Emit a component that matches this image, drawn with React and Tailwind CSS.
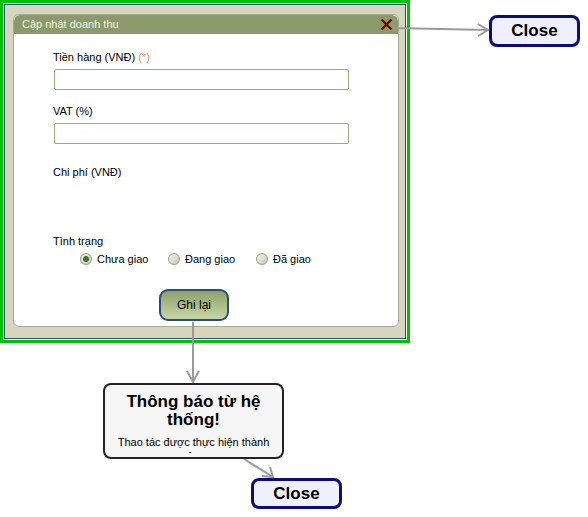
import { useState } from "react";

const font = { fontFamily: '"Liberation Sans", Arial, sans-serif' };

function Radio({ checked, label, onClick }) {
  return (
    <button type="button" onClick={onClick} className="flex items-center w-[88px] h-[14px] text-left">
      <span className="w-[12px] h-[12px] rounded-full border border-[#9a9a88] bg-gradient-to-br from-[#f4f4ec] to-[#c8c8b8] flex items-center justify-center">
        {checked && <span className="w-[6px] h-[6px] rounded-full bg-[#4a7a2a] border border-[#3a5a1a]" />}
      </span>
      <span className="ml-[5px] text-[11px] leading-[14px] text-black">{label}</span>
    </button>
  );
}

export default function App() {
  const [status, setStatus] = useState("chua");
  const [amount, setAmount] = useState("");
  const [vat, setVat] = useState("");

  return (
    <div className="relative w-[588px] h-[517px] bg-white overflow-hidden" style={font}>
      {/* dialog with green highlight */}
      <div className="absolute left-0 top-0 w-[410px] h-[343px] border-[3px] border-[#00c000] p-px bg-white">
        <div className="w-full h-full border border-[#2c4c7c] bg-[#d6d6be] pl-[8px] pt-[9px] pr-[4px]">
          <div className="w-[386px] h-[313px] bg-white rounded-[6px] border border-[#a8a898] overflow-hidden flex flex-col">
            <div className="h-[19px] bg-[#8a9a6a] flex items-center justify-between pl-[8px] pr-[5px] rounded-t-[6px]">
              <span className="text-[11px] text-[#f4f4e8]">Cập nhật doanh thu</span>
              <svg width="13" height="13" viewBox="0 0 13 13">
                <path d="M1.5 1.5 L11.5 11.5 M11.5 1.5 L1.5 11.5" stroke="#7a0000" strokeWidth="2.2" />
              </svg>
            </div>
            <div className="pl-[39px] flex flex-col">
              <div className="mt-[16px] text-[11px] leading-[14px] text-black">
                Tiền hàng (VNĐ) <span className="text-[#f08a5a]">(*)</span>
              </div>
              <input
                value={amount}
                onChange={(e) => setAmount(e.target.value)}
                className="mt-[5px] ml-px w-[295px] h-[21px] border border-[#9aae78] rounded-[2px] outline-none px-1 text-[12px]"
              />
              <div className="mt-[14px] text-[11px] leading-[14px] text-black">VAT (%)</div>
              <input
                value={vat}
                onChange={(e) => setVat(e.target.value)}
                className="mt-[5px] ml-px w-[295px] h-[21px] border border-[#9aae78] rounded-[2px] outline-none px-1 text-[12px]"
              />
              <div className="mt-[21px] text-[11px] leading-[14px] text-black">Chi phí (VNĐ)</div>
              <div className="mt-[55px] text-[11px] leading-[14px] text-black">Tình trạng</div>
              <div className="mt-[4px] ml-[27px] flex">
                <Radio checked={status === "chua"} label="Chưa giao" onClick={() => setStatus("chua")} />
                <Radio checked={status === "dang"} label="Đang giao" onClick={() => setStatus("dang")} />
                <Radio checked={status === "da"} label="Đã giao" onClick={() => setStatus("da")} />
              </div>
              <button
                type="button"
                className="mt-[23px] ml-[106px] w-[70px] h-[32px] rounded-[9px] border-2 border-[#2c4c7c] bg-gradient-to-b from-[#8ea268] to-[#c8d6a8] text-[12px] text-black"
              >
                Ghi lại
              </button>
            </div>
          </div>
        </div>
      </div>

      {/* connector arrows */}
      <svg className="absolute left-0 top-0 pointer-events-none" width="588" height="517">
        <g stroke="#9a9a9a" strokeWidth="2" fill="none">
          <line x1="393" y1="28" x2="488" y2="30" />
          <polyline points="478,24 488,30 478,36" />
          <line x1="193" y1="322" x2="193" y2="382" />
          <polyline points="187,371 193,382 199,371" />
          <line x1="244" y1="459" x2="273" y2="477" />
          <polyline points="262,476 273,477 270,467" />
        </g>
      </svg>

      <div className="absolute left-[489px] top-[15px] w-[91px] h-[32px] rounded-[8px] border-[3px] border-[#0c0c80] bg-[#eef0fe] flex items-center justify-center text-[17px] font-bold text-black">
        Close
      </div>

      <div className="absolute left-[103px] top-[383px] w-[181px] h-[76px] rounded-[8px] border-2 border-[#222] bg-[#f6f6f6] overflow-hidden flex flex-col items-center pt-[8px] px-[4px] text-center">
        <div className="text-[17px] leading-[18px] font-bold text-black">Thông báo từ hệ thống!</div>
        <div className="mt-[6px] h-[18px] overflow-hidden text-[11px] leading-[14px] text-black">
          Thao tác được thực hiện thành công
        </div>
      </div>

      <div className="absolute left-[251px] top-[478px] w-[91px] h-[31px] rounded-[8px] border-[3px] border-[#0c0c80] bg-[#eef0fe] flex items-center justify-center text-[17px] font-bold text-black">
        Close
      </div>
    </div>
  );
}
